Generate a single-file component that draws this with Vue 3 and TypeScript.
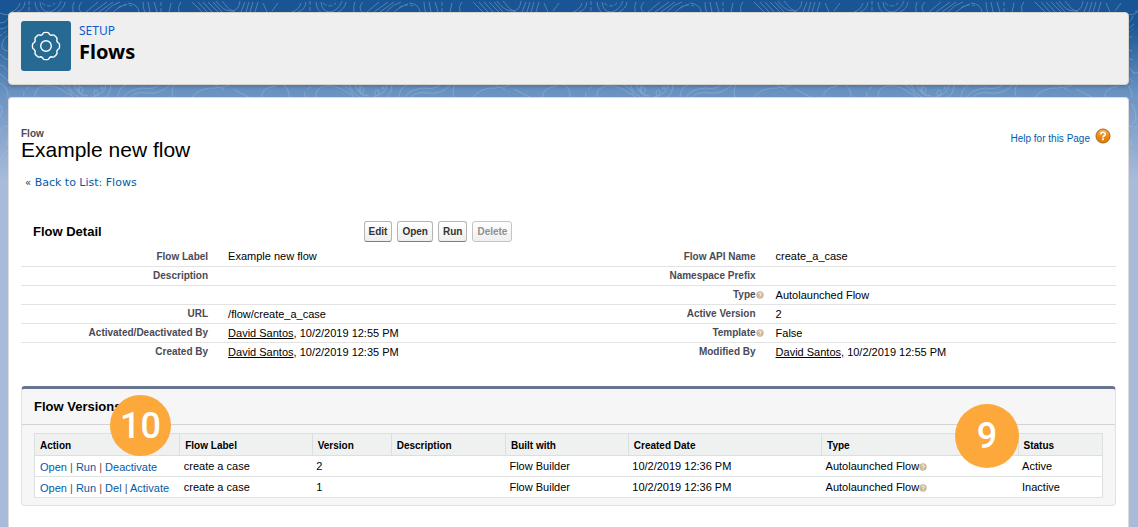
<script setup lang="ts">
interface DetailCell {
  label: string
  value?: string
  person?: string
  help?: boolean
}

interface FlowVersion {
  actions: string[]
  label: string
  version: string
  description: string
  builtWith: string
  created: string
  type: string
  status: string
}

const details: [DetailCell, DetailCell][] = [
  [{ label: 'Flow Label', value: 'Example new flow' }, { label: 'Flow API Name', value: 'create_a_case' }],
  [{ label: 'Description' }, { label: 'Namespace Prefix' }],
  [{ label: '' }, { label: 'Type', value: 'Autolaunched Flow', help: true }],
  [{ label: 'URL', value: '/flow/create_a_case' }, { label: 'Active Version', value: '2' }],
  [
    { label: 'Activated/Deactivated By', person: 'David Santos', value: ', 10/2/2019 12:55 PM' },
    { label: 'Template', value: 'False', help: true },
  ],
  [
    { label: 'Created By', person: 'David Santos', value: ', 10/2/2019 12:35 PM' },
    { label: 'Modified By', person: 'David Santos', value: ', 10/2/2019 12:55 PM' },
  ],
]

const buttons = [
  { label: 'Edit', disabled: false },
  { label: 'Open', disabled: false },
  { label: 'Run', disabled: false },
  { label: 'Delete', disabled: true },
]

const columns = ['Action', 'Flow Label', 'Version', 'Description', 'Built with', 'Created Date', 'Type', 'Status']

const versions: FlowVersion[] = [
  {
    actions: ['Open', 'Run', 'Deactivate'],
    label: 'create a case',
    version: '2',
    description: '',
    builtWith: 'Flow Builder',
    created: '10/2/2019 12:36 PM',
    type: 'Autolaunched Flow',
    status: 'Active',
  },
  {
    actions: ['Open', 'Run', 'Del', 'Activate'],
    label: 'create a case',
    version: '1',
    description: '',
    builtWith: 'Flow Builder',
    created: '10/2/2019 12:36 PM',
    type: 'Autolaunched Flow',
    status: 'Inactive',
  },
]

// Outline of a gear with eight rounded teeth around (25, 25).
function gearOutline(): string {
  const point = (radius: number, degrees: number): string => {
    const a = (degrees * Math.PI) / 180
    return `${(25 + radius * Math.cos(a)).toFixed(2)} ${(25 + radius * Math.sin(a)).toFixed(2)}`
  }
  let d = `M${point(12.3, -16)}`
  for (let k = 0; k < 8; k++) {
    const a = k * 45
    d += `Q${point(13.4, a - 13)} ${point(13.5, a - 9)}Q${point(13.9, a)} ${point(13.5, a + 9)}`
    d += `Q${point(13.4, a + 13)} ${point(12.3, a + 16)}Q${point(11.6, a + 22.5)} ${point(12.3, a + 29)}`
  }
  return d + 'Z'
}

const gear = gearOutline()
</script>

<template>
  <div class="page">
    <svg class="contours" width="100%" height="260" aria-hidden="true">
      <defs>
        <pattern id="topo" width="281" height="260" patternUnits="userSpaceOnUse">
          <g fill="none" stroke="#a9c4e2" stroke-width="1">
            <path d="M11 12Q18 10 20 3M17 12Q24 10 25 2M35 2Q36 12 42 13M40 2Q41 12 49 12Q57 11 61 1M57 12Q64 9 65 2M73 12Q72 6 74 2M82 13Q76 8 82 2" />
            <path d="M29 1V12M42 3Q49 9 55 3" stroke-dasharray="4 2" />
            <path d="M86 12L98 2M93 12L107 2M99 12L113 2M105 12Q112 4 120 2M113 12Q118 7 127 4M128 3Q138 4 139 12M143 2Q143 9 145 13M148 2L150 12M154 2L157 12M171 3L169 12M179 12Q177 6 181 2M192 2L202 12M198 2L207 12M203 2L212 12M208 2L218 12M213 2L222 12M216 1Q223 11 231 11Q239 11 240 1M222 1Q228 10 236 13M245 2L241 12M249 2L246 12M253 2L250 12M258 2L255 12M263 3L267 12M278 3L272 11" />
            <path d="M118 8Q123 3 132 6M161 2V12" stroke-dasharray="4 2" />
            <path d="M0 83Q9 88 8 98M35 97Q34 88 44 86Q57 85 65 92Q72 95 74 98M57 84Q67 84 73 97M68 84Q71 94 79 97M74 84Q76 93 84 96M80 84Q73 94 88 96M106 84Q106 94 92 97M111 84Q111 94 104 98M118 98Q118 88 126 85M123 98Q129 89 143 88Q155 90 160 84M129 98Q135 91 147 93Q159 95 170 85M174 84Q170 92 174 98M191 98Q200 87 215 88Q226 87 232 84M233 89Q244 95 249 97M262 98Q260 88 276 86" />
            <path d="M24 97Q22 90 31 86M213 84Q221 88 228 92" stroke-dasharray="5 3" />
            <ellipse cx="81" cy="90" rx="2" ry="3" />
            <ellipse cx="96" cy="93" rx="2" ry="3" />
            <circle cx="102" cy="88" r="1" />
            <path d="M0 13Q9 17 13 12M0 23Q7 23 9 16M0 29Q6 29 10 24M8 36Q3 38 2 45Q1 50 8 51M0 54Q5 60 9 60M0 65Q5 66 10 74M8 71Q12 75 14 72M0 74Q5 77 9 82M0 105Q4 108 0 117M8 104Q16 120 8 124M9 130Q12 126 16 126M8 138Q5 142 8 146M0 131Q5 124 9 127M8 150Q2 155 0 160M8 156Q4 160 1 168M8 161Q5 166 4 173M8 167L14 164M8 174L14 171M0 183Q2 176 8 179" />
            <path d="M0 36L9 29M0 178L9 171M8 188L15 184" stroke-dasharray="3 2" />
          </g>
        </pattern>
        <linearGradient id="fade" x1="0" y1="0" x2="0" y2="1">
          <stop offset="0" stop-color="#fff" stop-opacity="0.4" />
          <stop offset="0.75" stop-color="#fff" stop-opacity="0.4" />
          <stop offset="1" stop-color="#fff" stop-opacity="0" />
        </linearGradient>
        <mask id="fade-mask">
          <rect width="100%" height="200" fill="url(#fade)" />
        </mask>
      </defs>
      <rect width="100%" height="200" fill="url(#topo)" mask="url(#fade-mask)" />
    </svg>

    <header class="banner">
      <svg class="banner-icon" width="50" height="50" viewBox="0 0 50 50" aria-hidden="true">
        <rect width="50" height="50" rx="3" fill="#266a94" />
        <g fill="none" stroke="#fff" stroke-width="1.4" stroke-linejoin="round">
          <path :d="gear" />
          <circle cx="25" cy="25" r="5.3" />
        </g>
      </svg>
      <div>
        <div class="banner-kicker">SETUP</div>
        <div class="banner-title">Flows</div>
      </div>
    </header>

    <main class="content">
      <div class="title-row">
        <div>
          <div class="kicker">Flow</div>
          <h1>Example new flow</h1>
        </div>
        <a class="help-link" href="#">
          <span>Help for this Page</span>
          <svg width="16" height="16" viewBox="0 0 16 16" aria-hidden="true">
            <defs>
              <linearGradient id="orb" x1="0" y1="0" x2="0" y2="1">
                <stop offset="0" stop-color="#f3b04a" />
                <stop offset="0.5" stop-color="#ee8a0c" />
                <stop offset="1" stop-color="#d97a08" />
              </linearGradient>
            </defs>
            <circle cx="8" cy="8" r="7" fill="url(#orb)" stroke="#a8681c" />
            <path d="M5.7 6.4C5.7 3.6 10.3 3.6 10.3 6.2C10.3 7.8 8 7.8 8 9.4" fill="none" stroke="#fff" stroke-width="1.7" />
            <rect x="7" y="10.4" width="2" height="1.8" fill="#fff" />
          </svg>
        </a>
      </div>
      <div class="back"><span>«</span> <a href="#">Back to List: Flows</a></div>

      <section>
        <div class="detail-head">
          <h2>Flow Detail</h2>
          <div class="buttons">
            <button v-for="b in buttons" :key="b.label" type="button" :disabled="b.disabled">{{ b.label }}</button>
          </div>
        </div>
        <table class="detail">
          <tbody>
            <tr v-for="(row, i) in details" :key="i">
              <template v-for="(cell, j) in row" :key="j">
                <th scope="row">
                  {{ cell.label
                  }}<svg v-if="cell.help" class="hint hang" width="8" height="8" viewBox="0 0 8 8" aria-hidden="true">
                    <circle cx="4" cy="4" r="3.7" fill="#cbb898" />
                    <path d="M2.7 3.2C2.7 1.5 5.3 1.5 5.3 3.1C5.3 4 4 4 4 5M4 5.7V6.5" fill="none" stroke="#fff" stroke-width="1" />
                  </svg>
                </th>
                <td><a v-if="cell.person" href="#">{{ cell.person }}</a>{{ cell.value }}</td>
              </template>
            </tr>
          </tbody>
        </table>
      </section>

      <section class="panel">
        <h2>Flow Versions</h2>
        <div class="panel-body">
          <table class="versions">
            <colgroup>
              <col v-for="c in columns" :key="c" :class="'col-' + c.toLowerCase().replace(' ', '-')" />
            </colgroup>
            <thead>
              <tr>
                <th v-for="c in columns" :key="c" scope="col">{{ c }}</th>
              </tr>
            </thead>
            <tbody>
              <tr v-for="v in versions" :key="v.version">
                <td class="actions">
                  <template v-for="(a, i) in v.actions" :key="a"><span v-if="i > 0"> | </span><a href="#">{{ a }}</a></template>
                </td>
                <td>{{ v.label }}</td>
                <td>{{ v.version }}</td>
                <td>{{ v.description }}</td>
                <td>{{ v.builtWith }}</td>
                <td>{{ v.created }}</td>
                <td>
                  {{ v.type
                  }}<svg class="hint" width="8" height="8" viewBox="0 0 8 8" aria-hidden="true">
                    <circle cx="4" cy="4" r="3.7" fill="#cbb898" />
                    <path d="M2.7 3.2C2.7 1.5 5.3 1.5 5.3 3.1C5.3 4 4 4 4 5M4 5.7V6.5" fill="none" stroke="#fff" stroke-width="1" />
                  </svg>
                </td>
                <td>{{ v.status }}</td>
              </tr>
            </tbody>
          </table>
        </div>
        <div class="badge badge-ten">10</div>
        <div class="badge badge-nine">9</div>
      </section>
    </main>
  </div>
</template>

<style>
body {
  margin: 0;
}
</style>

<style scoped>
.page {
  position: relative;
  box-sizing: border-box;
  min-height: 100vh;
  padding: 12px 9px 0 8px;
  display: flex;
  flex-direction: column;
  gap: 12px;
  font-family: "Liberation Sans", Arial, sans-serif;
  font-size: 11px;
  color: #000;
  background: #a8bbdb linear-gradient(#195594 0, #1b5796 26px, #6a92c1 92px, #a8bbdb 180px) no-repeat;
}

.contours {
  position: absolute;
  top: 0;
  left: 0;
}

a {
  color: #015ba7;
  text-decoration: none;
}

h1,
h2 {
  margin: 0;
}

.banner {
  position: relative;
  display: flex;
  gap: 8px;
  padding: 8px 12px 13px;
  background: #efefef;
  border: 1px solid #d6d4cc;
  border-radius: 4px;
  box-shadow: 0 2px 3px rgba(0, 0, 0, 0.15);
  font-family: "Noto Sans", sans-serif;
}

.banner-icon {
  display: block;
}

.banner-kicker {
  color: #0b5cce;
  font-size: 12px;
  line-height: 20px;
}

.banner-title {
  font-size: 20px;
  font-weight: 700;
  line-height: 22px;
}

.content {
  position: relative;
  flex: 1;
  padding: 30px 12px 20px;
  background: #fff;
  border: 1px solid #dddbda;
  border-bottom: 0;
  border-radius: 4px 4px 0 0;
}

.title-row {
  display: flex;
  justify-content: space-between;
}

.kicker {
  color: #4a4a56;
  font-size: 10px;
  font-weight: 700;
  line-height: 12px;
}

h1 {
  font-size: 21px;
  font-weight: 400;
  line-height: 20px;
}

.help-link {
  display: flex;
  gap: 5px;
  padding-right: 5px;
  font-size: 10px;
  line-height: 22px;
}

.back {
  margin-top: 15px;
  padding-left: 4px;
  font-family: "DejaVu Sans", Verdana, sans-serif;
  line-height: 16px;
}

.back span {
  font-size: 10px;
  color: #333;
}

.detail-head {
  display: flex;
  align-items: center;
  margin-top: 30px;
}

h2 {
  font-size: 13px;
  font-weight: 700;
}

.detail-head h2 {
  box-sizing: border-box;
  width: 30%;
  padding-left: 12px;
}

.buttons {
  display: flex;
  gap: 5px;
  margin-left: 14px;
}

button {
  height: 21px;
  padding: 0 4px;
  border: 1px solid #b5b5b5;
  border-bottom-color: #7f7f7f;
  border-radius: 3px;
  background: linear-gradient(#fff, #efefef);
  color: #333;
  font: 700 10px "Liberation Sans", Arial, sans-serif;
}

button:disabled {
  border-color: #c4c4c4;
  color: #909090;
}

.detail {
  width: 100%;
  margin-top: 5px;
  border-collapse: collapse;
  table-layout: fixed;
}

.detail th,
.detail td {
  box-sizing: border-box;
  height: 19px;
  padding: 0 10px;
  border-bottom: 1px solid #e3e3e3;
  white-space: nowrap;
}

.detail tr:last-child > * {
  border-bottom: 0;
}

.detail th {
  width: 18%;
  color: #4a4a56;
  font-size: 10px;
  text-align: right;
}

.detail td {
  width: 32%;
}

.detail a {
  color: #000;
  text-decoration: underline;
}

.hint {
  vertical-align: -1px;
}

.hang {
  margin-right: -8px;
}

.panel {
  position: relative;
  margin-top: 25px;
  background: #f6f6f6;
  border: 1px solid #e2e2e2;
  border-top: 3px solid #68738f;
  border-radius: 4px;
}

.panel h2 {
  padding: 0 12px;
  border-bottom: 1px solid #d3d3d3;
  line-height: 35px;
}

.panel-body {
  padding: 8px 12px 7px;
}

.versions {
  width: 100%;
  border: 1px solid #dcdfdf;
  border-collapse: collapse;
  table-layout: fixed;
  background: #fff;
}

.versions th,
.versions td {
  box-sizing: border-box;
  height: 21px;
  padding: 0 4px;
  border-bottom: 1px solid #dfe2e2;
  text-align: left;
  white-space: nowrap;
}

.versions th {
  height: 22px;
  padding: 2px 5px 0;
  border: 1px solid #dcdfdf;
  background: #eff1f1;
  font-size: 10px;
}

.versions .actions {
  padding: 2px 5px 0;
}

.actions span {
  color: #555;
  white-space: pre;
}

.col-action {
  width: 13.6%;
}

.col-flow-label {
  width: 12.4%;
}

.col-version {
  width: 7.4%;
}

.col-description {
  width: 10.7%;
}

.col-built-with {
  width: 11.5%;
}

.col-created-date {
  width: 18.1%;
}

.col-type {
  width: 18.4%;
}

.col-status {
  width: 7.9%;
}

.badge {
  position: absolute;
  display: flex;
  align-items: center;
  justify-content: center;
  border-radius: 50%;
  background: #fca83a;
  color: #fff;
  font-family: Roboto, sans-serif;
  font-size: 36px;
  font-weight: 500;
}

.badge-ten {
  top: 6px;
  left: 88px;
  width: 61px;
  height: 61px;
}

.badge-nine {
  top: 15px;
  right: 96px;
  width: 64px;
  height: 64px;
}
</style>
